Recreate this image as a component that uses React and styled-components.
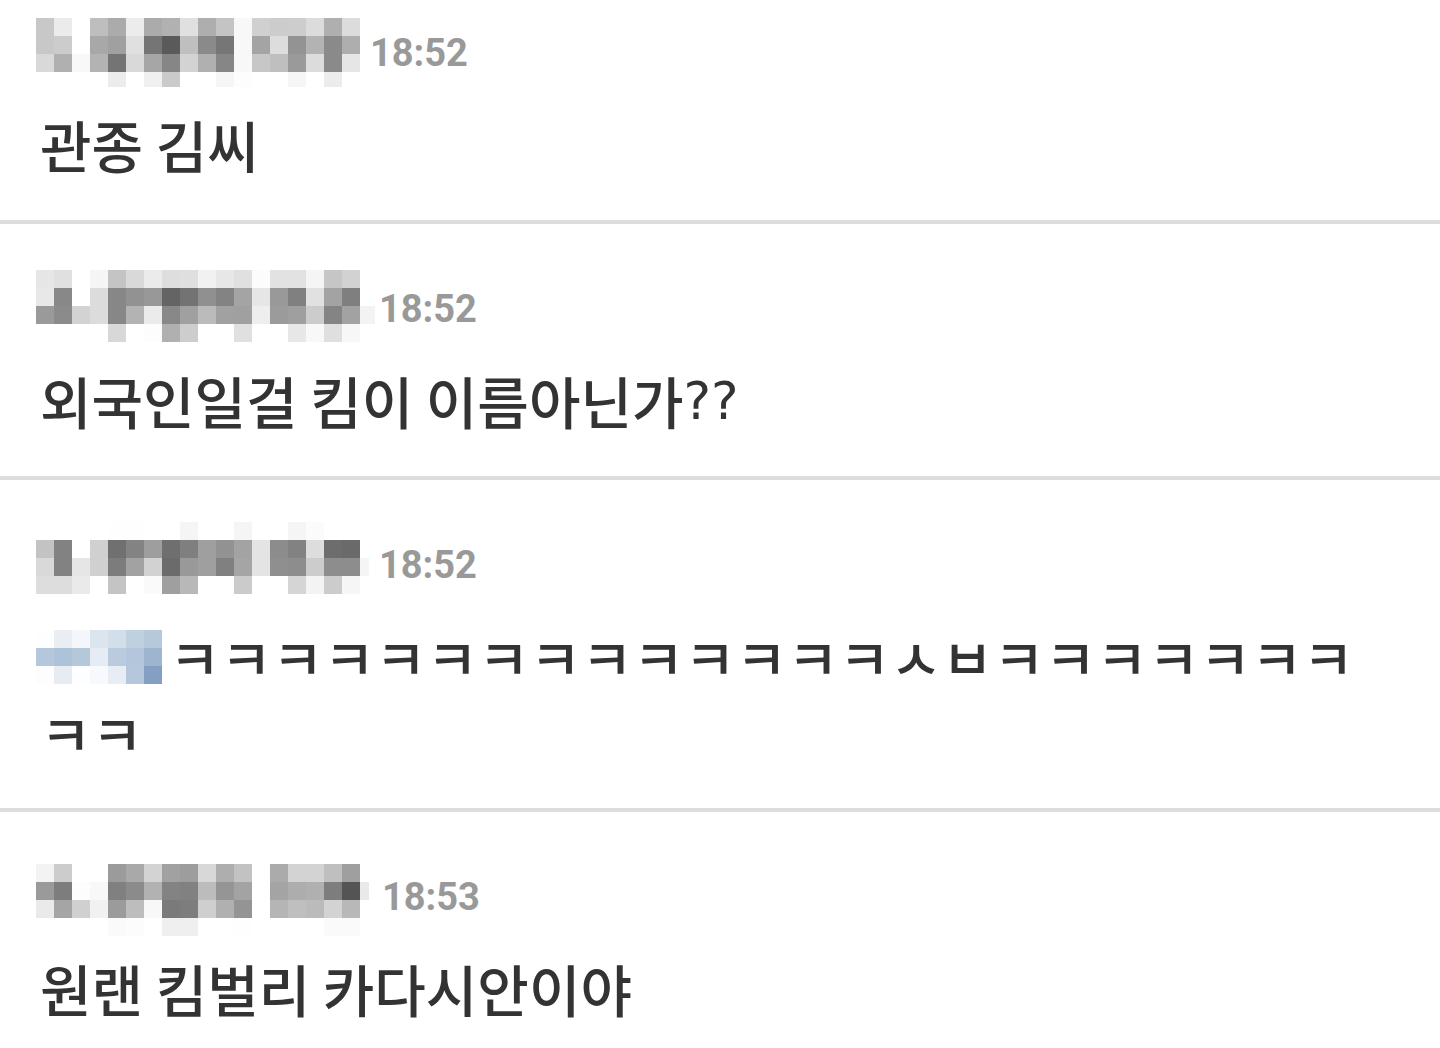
import React from "react";
import styled, { createGlobalStyle } from "styled-components";

const CELL = 18;

// one string per mosaic line, two hex digits of grey per cell
const messages = [
  {
    time: "18:52",
    width: 324,
    height: 77,
    top: 8,
    gap: 10,
    name: [
      "c8ebffbeabecabb1e0aec4f8d0cccddcafdc",
      "c8ccffa8a0e0755abf8a76f8a4dd93b38aae",
      "d9b0f8b374d9a686d3b086f8c7bf9adc8ae6",
      "ffffffffecfff0cafffff6fdfffff6ffecff",
    ],
    text: "관종 김씨",
  },
  {
    time: "18:52",
    width: 339,
    height: 76,
    top: 4,
    gap: 4,
    name: [
      "e6e0fff5c4d9ebdedff1e7e0fce2e2f5c6d2",
      "e888ffdc87929864739083a4e69980e1a37f",
      "9a8bd3dc87b3eb88a0bba1a0ee9b9fcc84a2f3",
      "ffffffffd8fffdb0cdffffe0ffffe7f8dff7",
    ],
    text: "외국인일걸 킴이 이름아닌가",
    ending: "??",
  },
  {
    time: "18:52",
    width: 333,
    height: 72,
    top: 0,
    gap: 10,
    name: [
      "fffffffffefefffff5fffff5fffff5fbffff",
      "c382ffd070839e6f7f9f92a3e48c82dd6d6a",
      "d982e6d07ca2d26b999f80a5e48f8dcc8d8df5",
      "ddddeaffc4fffa9fb8ffffcbffffd5f3ccf6",
    ],
    mention: [
      "fdfefe e9eef3 f3f7fb dbe5ee d2dee9 bfd0df b5c9db",
      "b5c7dd adc3da b5c8da e6ecf4 bacbdd b4c6dc 9eb4cf",
      "fdfdfd e7ecf2 fdfeff f7f9fc e8edf4 b5c7dd 83a0c3",
    ],
    text: "ㅋㅋㅋㅋㅋㅋㅋㅋㅋㅋㅋㅋㅋㅋㅅㅂㅋㅋㅋㅋㅋㅋㅋㅋㅋ",
  },
  {
    time: "18:53",
    width: 333,
    height: 82,
    top: 10,
    gap: 13,
    name: [
      "f3ccffff9ba9d3a19dd8aec2ffabd3d3bf9f",
      "9a7dfdf8808bb28381bc95a3ffa4adb07d54e9",
      "eaa5d0f19bbdf87a7dcfb094ffb5bfbbd3b8",
      "fffffffffafcffefeffffffefffffffffafa",
    ],
    text: "원랜 킴벌리 카다시안이야",
  },
];

const toGreys = (line) => line.match(/../g).map((g) => `#${g}${g}${g}`);
const toColors = (line) => line.split(" ").map((c) => `#${c}`);

const Mosaic = ({ lines, top = 0 }) => (
  <g shapeRendering="crispEdges">
    {lines.map((line, row) =>
      line.map((fill, col) => (
        <rect
          key={`${row}-${col}`}
          x={col * CELL}
          y={top + row * CELL}
          width={CELL}
          height={CELL}
          fill={fill}
        />
      ))
    )}
  </g>
);

const Message = ({ message }) => (
  <StyledMessage>
    <StyledHeader $gap={message.gap}>
      <StyledName
        width={message.width}
        height={message.height}
        role="img"
        aria-label="Hidden name"
      >
        <Mosaic lines={message.name.map(toGreys)} top={message.top} />
      </StyledName>
      <StyledTime>{message.time}</StyledTime>
    </StyledHeader>
    <StyledText>
      {message.mention && (
        <StyledMention
          width="133"
          height="54"
          role="img"
          aria-label="Hidden mention"
        >
          <Mosaic lines={message.mention.map(toColors)} />
        </StyledMention>
      )}
      {message.text}
      {message.ending && <StyledEnding>{message.ending}</StyledEnding>}
    </StyledText>
  </StyledMessage>
);

const App = () => {
  return (
    <StyledList>
      <GlobalStyle />
      {messages.map((message, i) => (
        <Message key={i} message={message} />
      ))}
    </StyledList>
  );
};

const GlobalStyle = createGlobalStyle`
  body {
    margin: 0;
    background-color: #ffffff;
  }
`;
const StyledList = styled.ul`
  margin: 0;
  padding: 0;
  list-style: none;
`;
const StyledMessage = styled.li`
  padding: 42px 36px 38px;
  border-bottom: 4px solid #dcdcdc;

  &:first-child {
    padding-top: 10px;
  }
  &:last-child {
    padding-bottom: 22px;
    border-bottom: none;
  }
`;
const StyledHeader = styled.div`
  display: flex;
  align-items: flex-start;
  gap: ${(props) => props.$gap}px;
  margin-bottom: 10px;
`;
const StyledName = styled.svg`
  flex: none;
`;
const StyledTime = styled.time`
  color: #999999;
  font-family: Roboto, sans-serif;
  font-size: 38px;
  font-weight: 700;
  line-height: 86px;
`;
const StyledText = styled.p`
  margin: 0;
  padding: 0 4px;
  color: #333333;
  font-family: "Noto Sans CJK KR", sans-serif;
  font-size: 56px;
  font-weight: 500;
  line-height: 76px;
  word-break: break-all;
`;
const StyledMention = styled.svg`
  margin-left: -4px;
  vertical-align: -4px;
`;
const StyledEnding = styled.span`
  font-family: "DejaVu Sans", sans-serif;
  font-size: 52px;
  font-weight: 400;
  line-height: 1;
  vertical-align: 5px;
`;

export default App;
